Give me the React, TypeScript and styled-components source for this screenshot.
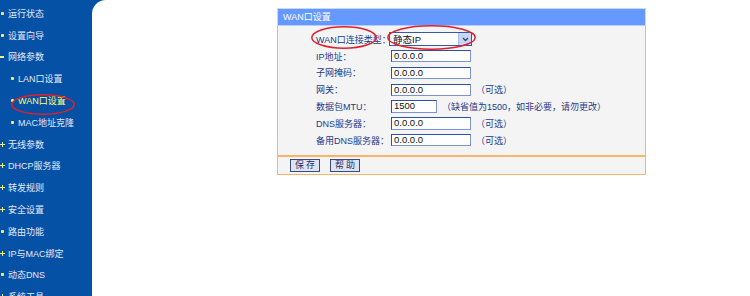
import React from 'react';
import styled, { createGlobalStyle, css } from 'styled-components';

const GlobalStyle = createGlobalStyle`
  html, body {
    margin: 0;
    padding: 0;
    background: #ffffff;
  }
  body {
    font-family: "Liberation Sans", "Noto Sans CJK SC", sans-serif;
  }
`

const Page = styled.div`
  display: flex;
  width: 750px;
  height: 296px;
  overflow: hidden;
  background: #0551a6;
`

const Sidebar = styled.ul`
  width: 92px;
  flex: none;
  margin: 0;
  padding: 2.4px 0 0;
  list-style: none;
`

const MenuItem = styled.li<{ $sub?: boolean; $active?: boolean }>`
  position: relative;
  display: flex;
  align-items: center;
  gap: 4px;
  height: 21.8px;
  padding-left: ${p => (p.$sub ? '11px' : '1px')};
  font-size: 9px;
  color: ${p => (p.$active ? '#ffff7a' : '#e2eaf8')};
  white-space: nowrap;
`

const Bullet = styled.span<{ $kind: 'dot' | 'plus' | 'dash' }>`
  position: relative;
  flex: none;
  width: 3px;
  height: 3px;
  ${p => p.$kind === 'dot' && css`
    background: #f4f070;
    border-radius: 1px;
  `}
  ${p => p.$kind === 'plus' && css`
    &::before, &::after {
      content: '';
      position: absolute;
      background: #f4f070;
    }
    &::before { left: -1px; top: 1px; width: 5px; height: 1px; }
    &::after { left: 1px; top: -1px; width: 1px; height: 5px; }
  `}
  ${p => p.$kind === 'dash' && css`
    width: 4px;
    height: 1.5px;
    margin-left: -1px;
    background: #f4f070;
  `}
`

const Main = styled.main`
  flex: 1;
  background: #ffffff;
  border-top-left-radius: 14px;
  padding: 8px 0 0 185px;
`

const Panel = styled.section`
  width: 369px;
`

const PanelHeader = styled.div`
  height: 16px;
  border: 1px solid #c9d8ff;
  border-bottom-color: #b8ccff;
  background: #6699ff;
  color: #ffffff;
  font-size: 9px;
  line-height: 16px;
  padding-left: 5px;
`

const PanelBody = styled.div`
  background: #f4f4f4;
  border-left: 1px solid #fbb36a;
  border-right: 1px solid #fbb36a;
  padding: 5px 0 6.4px 38px;
`

const Row = styled.div`
  display: flex;
  align-items: center;
  height: 16.8px;
`

const Label = styled.div`
  position: relative;
  width: 75px;
  flex: none;
  font-size: 9px;
  color: #233a8c;
  white-space: nowrap;
`

const TextInput = styled.div<{ $w?: number }>`
  box-sizing: border-box;
  width: ${p => p.$w ?? 80}px;
  height: 12.5px;
  background: #ffffff;
  border: 1px solid #2e4fa8;
  border-right-color: #7d93cf;
  border-bottom-color: #7d93cf;
  font-size: 9.5px;
  line-height: 10.5px;
  padding-left: 2px;
  color: #111;
`

const Select = styled.div`
  position: relative;
  box-sizing: border-box;
  display: flex;
  align-items: center;
  justify-content: space-between;
  width: 83px;
  height: 14px;
  margin-left: -2px;
  background: #ffffff;
  border: 1px solid #3957b0;
  font-size: 9.5px;
  color: #111;
  padding-left: 3px;
`

const SelectArrow = styled.span`
  display: flex;
  align-items: center;
  justify-content: center;
  width: 12px;
  height: 12px;
  background: #c8d6f4;
  border-left: 1px solid #a9bde8;
`

const Note = styled.span`
  margin-left: 5px;
  font-size: 9px;
  color: #233a8c;
  white-space: nowrap;
`

const Divider = styled.div`
  height: 2px;
  background: #fbb36a;
`

const PanelFooter = styled.div`
  display: flex;
  align-items: center;
  gap: 10px;
  height: 17px;
  padding-left: 12px;
  background: #f4f4f4;
  border-left: 1px solid #fbb36a;
  border-right: 1px solid #fbb36a;
  border-bottom: 1px solid #fbb36a;
`

const Button = styled.button`
  box-sizing: border-box;
  width: 30px;
  height: 13px;
  padding: 0;
  background: #dde4f0;
  border: 1px solid #3a4a7c;
  font-family: inherit;
  font-size: 9px;
  line-height: 11px;
  letter-spacing: 2px;
  color: #1d2d6a;
  text-indent: 2px;
`

const Mark = styled.svg<{ $x: number; $y: number; $w: number; $h: number }>`
  position: absolute;
  left: ${p => p.$x}px;
  top: ${p => p.$y}px;
  width: ${p => p.$w}px;
  height: ${p => p.$h}px;
  overflow: visible;
  pointer-events: none;
`

const RedRing: React.FC<{ x: number; y: number; w: number; h: number }> = ({ x, y, w, h }) => (
  <Mark $x={x} $y={y} $w={w} $h={h} viewBox={`0 0 ${w} ${h}`}>
    <ellipse cx={w / 2} cy={h / 2} rx={w / 2 - 0.8} ry={h / 2 - 0.8} fill="none" stroke="#e0202a" strokeWidth="1.5" />
  </Mark>
)

type Menu = { text: string; kind: 'dot' | 'plus' | 'dash'; sub?: boolean; active?: boolean }

const menu: Menu[] = [
  { text: '运行状态', kind: 'dot' },
  { text: '设置向导', kind: 'dot' },
  { text: '网络参数', kind: 'dash' },
  { text: 'LAN口设置', kind: 'dot', sub: true },
  { text: 'WAN口设置', kind: 'dot', sub: true, active: true },
  { text: 'MAC地址克隆', kind: 'dot', sub: true },
  { text: '无线参数', kind: 'plus' },
  { text: 'DHCP服务器', kind: 'plus' },
  { text: '转发规则', kind: 'plus' },
  { text: '安全设置', kind: 'plus' },
  { text: '路由功能', kind: 'dot' },
  { text: 'IP与MAC绑定', kind: 'plus' },
  { text: '动态DNS', kind: 'dot' },
  { text: '系统工具', kind: 'plus' },
]

const fields: { label: string; value: string; note?: string; width?: number }[] = [
  { label: 'IP地址：', value: '0.0.0.0' },
  { label: '子网掩码：', value: '0.0.0.0' },
  { label: '网关：', value: '0.0.0.0', note: '（可选）' },
  { label: '数据包MTU：', value: '1500', note: '（缺省值为1500，如非必要，请勿更改）', width: 46 },
  { label: 'DNS服务器：', value: '0.0.0.0', note: '（可选）' },
  { label: '备用DNS服务器：', value: '0.0.0.0', note: '（可选）' },
]

const App: React.FC = () => (
  <>
    <GlobalStyle />
    <Page>
      <Sidebar>
        {menu.map(item => (
          <MenuItem key={item.text} $sub={item.sub} $active={item.active}>
            <Bullet $kind={item.kind} />
            {item.text}
            {item.active && <RedRing x={11} y={4} w={64} h={21} />}
          </MenuItem>
        ))}
      </Sidebar>
      <Main>
        <Panel>
          <PanelHeader>WAN口设置</PanelHeader>
          <PanelBody>
            <Row>
              <Label>
                WAN口连接类型：
                <RedRing x={-5} y={-6.5} w={66} h={23} />
              </Label>
              <Select>
                静态IP
                <SelectArrow>
                  <svg width="7" height="5" viewBox="0 0 7 5">
                    <path d="M1 1 L3.5 3.5 L6 1" fill="none" stroke="#2a3f80" strokeWidth="1.3" />
                  </svg>
                </SelectArrow>
                <RedRing x={-3} y={-8} w={89} h={25} />
              </Select>
            </Row>
            {fields.map(f => (
              <Row key={f.label}>
                <Label>{f.label}</Label>
                <TextInput $w={f.width}>{f.value}</TextInput>
                {f.note && <Note>{f.note}</Note>}
              </Row>
            ))}
          </PanelBody>
          <Divider />
          <PanelFooter>
            <Button>保存</Button>
            <Button>帮助</Button>
          </PanelFooter>
        </Panel>
      </Main>
    </Page>
  </>
)

export default App;
